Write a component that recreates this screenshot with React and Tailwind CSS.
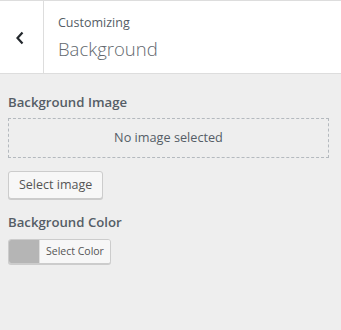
export default function App() {
  const font = { fontFamily: '"Open Sans", "Noto Sans", sans-serif' };
  return (
    <div className="w-[341px] h-[330px] bg-[#eeeeee] text-[#555d66] overflow-hidden" style={font}>
      <div className="flex h-[74px] bg-white border-t border-b border-[#dddddd]">
        <div className="w-[44px] shrink-0 border-r border-[#dddddd] flex items-center justify-center">
          <svg width="10" height="14" viewBox="0 0 10 14" className="ml-[-4px] mt-[2px]">
            <path d="M7.5 1.5 L2.5 7 L7.5 12.5" fill="none" stroke="#23282d" strokeWidth="2.2" strokeLinecap="butt" />
          </svg>
        </div>
        <div className="pl-[14px] pt-[12px] flex flex-col">
          <span className="text-[12.5px] leading-[20px]">Customizing</span>
          <span className="text-[18.5px] leading-[26px] font-light mt-[3px] text-[#62686e]">Background</span>
        </div>
      </div>
      <div className="pl-[8px] pr-[12px] pt-[18px]">
        <div className="text-[13.2px] leading-[20px] font-semibold">Background Image</div>
        <div className="mt-[6px] h-[40px] border border-dashed border-[#b4b9be] flex items-center justify-center text-[12.7px]">
          No image selected
        </div>
        <button className="mt-[13px] h-[28px] px-[10px] border border-[#cccccc] bg-[#f7f7f7] rounded-[3px] shadow-[0_1px_0_#cccccc] text-[12.5px] leading-[26px] text-[#555555]">
          Select image
        </button>
        <div className="mt-[13px] text-[13.2px] leading-[20px] font-semibold">Background Color</div>
        <button className="mt-[7px] h-[25px] flex items-stretch border border-[#cccccc] bg-[#f7f7f7] rounded-[3px] shadow-[0_1px_0_#cccccc] overflow-hidden">
          <span className="w-[30px] bg-[#b5b5b5]"></span>
          <span className="px-[6px] text-[10.5px] leading-[23px] text-[#555555] bg-[#f7f7f7] border-l border-[#dddddd]">Select Color</span>
        </button>
      </div>
    </div>
  );
}
